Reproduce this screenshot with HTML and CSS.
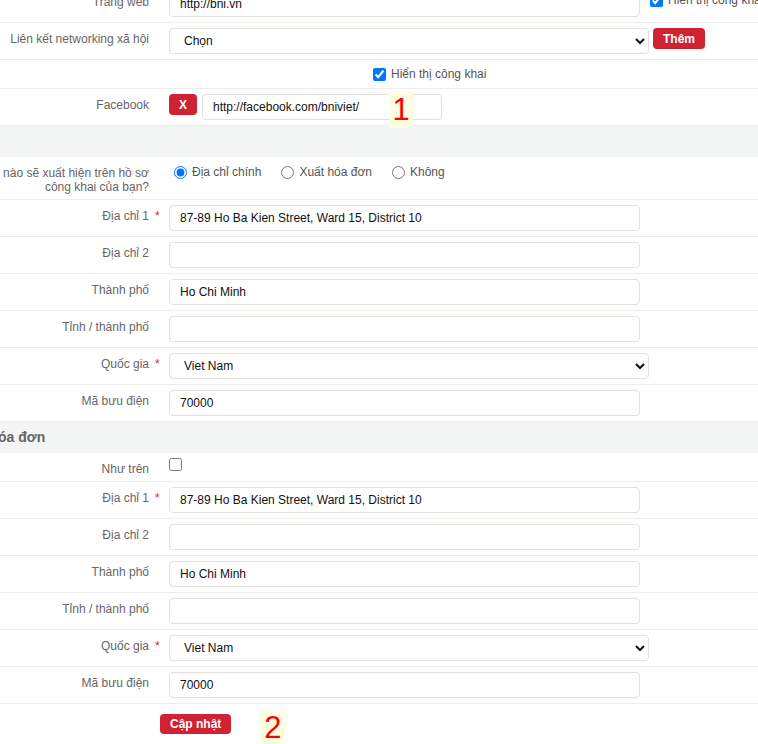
FILE: index.html
```html
<!DOCTYPE html>
<html lang="vi">

<head>
    <meta charset="UTF-8">
    <meta name="viewport" content="width=device-width, initial-scale=1.0">
    <title>Hồ sơ thành viên</title>
    <link rel="stylesheet" href="styles.css">
</head>

<body>

    <form class="profile-form">
        <div class="row">
            <label class="label" for="website">Trang web</label>
            <span class="req"></span>
            <div class="field">
                <input id="website" class="input" type="text" value="http://bni.vn">
                <label class="check check-side"><input type="checkbox" checked> Hiển thị công khai</label>
            </div>
        </div>

        <div class="row">
            <label class="label" for="social">Liên kết networking xã hội</label>
            <span class="req"></span>
            <div class="field">
                <select id="social" class="select">
                    <option>Chọn</option>
                    <option>Facebook</option>
                    <option>LinkedIn</option>
                    <option>Twitter</option>
                </select>
                <button type="button" class="btn btn-add">Thêm</button>
            </div>
        </div>

        <div class="row">
            <span class="label"></span>
            <span class="req"></span>
            <div class="field">
                <label class="check check-public"><input type="checkbox" checked> Hiển thị công khai</label>
            </div>
        </div>

        <div class="row row-note">
            <label class="label" for="facebook">Facebook</label>
            <span class="req"></span>
            <div class="field">
                <button type="button" class="btn btn-remove">X</button>
                <input id="facebook" class="input input-short" type="text" value="http://facebook.com/bniviet/">
            </div>
            <span class="note note-1">1</span>
        </div>

        <h3 class="section">Địa chỉ</h3>

        <div class="row">
            <span class="label">Địa chỉ nào sẽ xuất hiện trên hồ sơ công khai của bạn?</span>
            <span class="req"></span>
            <div class="field">
                <label class="radio"><input type="radio" name="public_address" checked> Địa chỉ chính</label>
                <label class="radio"><input type="radio" name="public_address"> Xuất hóa đơn</label>
                <label class="radio"><input type="radio" name="public_address"> Không</label>
            </div>
        </div>

        <div class="row">
            <label class="label" for="addr1">Địa chỉ 1</label>
            <span class="req">*</span>
            <div class="field"><input id="addr1" class="input" type="text" value="87-89 Ho Ba Kien Street, Ward 15, District 10"></div>
        </div>
        <div class="row">
            <label class="label" for="addr2">Địa chỉ 2</label>
            <span class="req"></span>
            <div class="field"><input id="addr2" class="input" type="text"></div>
        </div>
        <div class="row">
            <label class="label" for="city">Thành phố</label>
            <span class="req"></span>
            <div class="field"><input id="city" class="input" type="text" value="Ho Chi Minh"></div>
        </div>
        <div class="row">
            <label class="label" for="state">Tỉnh / thành phố</label>
            <span class="req"></span>
            <div class="field"><input id="state" class="input" type="text"></div>
        </div>
        <div class="row">
            <label class="label" for="country">Quốc gia</label>
            <span class="req">*</span>
            <div class="field">
                <select id="country" class="select">
                    <option>Viet Nam</option>
                    <option>Thailand</option>
                    <option>Singapore</option>
                </select>
            </div>
        </div>
        <div class="row">
            <label class="label" for="zip">Mã bưu điện</label>
            <span class="req"></span>
            <div class="field"><input id="zip" class="input" type="text" value="70000"></div>
        </div>

        <h3 class="section">Địa chỉ xuất hóa đơn</h3>

        <div class="row">
            <label class="label" for="same">Như trên</label>
            <span class="req"></span>
            <div class="field"><input id="same" class="plain-check" type="checkbox"></div>
        </div>
        <div class="row">
            <label class="label" for="baddr1">Địa chỉ 1</label>
            <span class="req">*</span>
            <div class="field"><input id="baddr1" class="input" type="text" value="87-89 Ho Ba Kien Street, Ward 15, District 10"></div>
        </div>
        <div class="row">
            <label class="label" for="baddr2">Địa chỉ 2</label>
            <span class="req"></span>
            <div class="field"><input id="baddr2" class="input" type="text"></div>
        </div>
        <div class="row">
            <label class="label" for="bcity">Thành phố</label>
            <span class="req"></span>
            <div class="field"><input id="bcity" class="input" type="text" value="Ho Chi Minh"></div>
        </div>
        <div class="row">
            <label class="label" for="bstate">Tỉnh / thành phố</label>
            <span class="req"></span>
            <div class="field"><input id="bstate" class="input" type="text"></div>
        </div>
        <div class="row">
            <label class="label" for="bcountry">Quốc gia</label>
            <span class="req">*</span>
            <div class="field">
                <select id="bcountry" class="select">
                    <option>Viet Nam</option>
                    <option>Thailand</option>
                    <option>Singapore</option>
                </select>
            </div>
        </div>
        <div class="row">
            <label class="label" for="bzip">Mã bưu điện</label>
            <span class="req"></span>
            <div class="field"><input id="bzip" class="input" type="text" value="70000"></div>
        </div>

        <div class="actions">
            <button type="submit" class="btn btn-save">Cập nhật</button>
            <span class="note note-2">2</span>
        </div>
    </form>

</body>

</html>
```

FILE: styles.css
```css
* {
    box-sizing: border-box;
}

body {
    margin: 0;
    font-family: "Liberation Sans", Arial, sans-serif;
    font-size: 12px;
    color: #666;
    background-color: #fff;
    overflow: hidden;
}

/* the page is scrolled a bit, so the form starts above and left of the window */
.profile-form {
    margin: -14px 0 0 -108px;
}

.row {
    display: grid;
    grid-template-columns: 257px 20px 1fr;
    padding: 5px 0;
    border-bottom: 1px solid #ececec;
}

.row-note {
    position: relative;
}

.label {
    padding: 4px 0 0 50px;
    line-height: 14px;
    text-align: right;
    color: #666;
}

.req {
    padding: 4px 0 0 6px;
    line-height: 14px;
    color: #d9232d;
}

.field {
    display: flex;
    align-items: flex-start;
    min-height: 18px;
    line-height: 18px;
}

.input {
    width: 471px;
    height: 26px;
    padding: 0 10px;
    border: 1px solid #e1e0db;
    border-radius: 4px;
    font-family: inherit;
    font-size: 12px;
    color: #111;
    background-color: #fff;
}

.input-short {
    width: 240px;
    margin-left: 5px;
}

.select {
    width: 480px;
    height: 26px;
    padding: 0 10px;
    border: 1px solid #e1e0db;
    border-radius: 4px;
    font-family: inherit;
    font-size: 12px;
    color: #111;
    background-color: #fff;
}

.btn {
    height: 21px;
    padding: 0 10px;
    border: none;
    border-radius: 4px;
    background-color: #cf2233;
    color: #fff;
    font-family: inherit;
    font-size: 12px;
    font-weight: bold;
}

.btn-add {
    margin-left: 4px;
}

.btn-save {
    height: 20px;
    margin-top: 5px;
}

.check {
    display: flex;
    align-items: center;
    color: #555;
}

.check input {
    width: 13px;
    height: 13px;
    margin: 0 5px 0 0;
}

.check-side {
    margin: 0 0 0 10px;
    white-space: nowrap;
}

.check-public {
    margin-left: 204px;
}

.plain-check {
    width: 13px;
    height: 13px;
    margin: 0;
}

.radio {
    display: flex;
    align-items: center;
    margin-right: 15px;
    line-height: 20px;
    color: #555;
}

.radio input {
    width: 13px;
    height: 13px;
    margin: 0 5px;
}

.section {
    margin: 0;
    padding: 7px 15px;
    background-color: #f4f5f5;
    font-size: 14px;
    line-height: 17px;
    color: #666;
    white-space: nowrap;
}

.actions {
    display: flex;
    align-items: flex-start;
    padding: 5px 0 0 268px;
}

.note {
    width: 25px;
    height: 36px;
    background-color: #fffee2;
    color: #f00;
    font-size: 31px;
    line-height: 38px;
    text-align: center;
}

.note-1 {
    position: absolute;
    left: 497px;
    top: 2px;
    width: 24px;
    height: 37px;
}

.note-2 {
    margin-left: 29px;
}
```
